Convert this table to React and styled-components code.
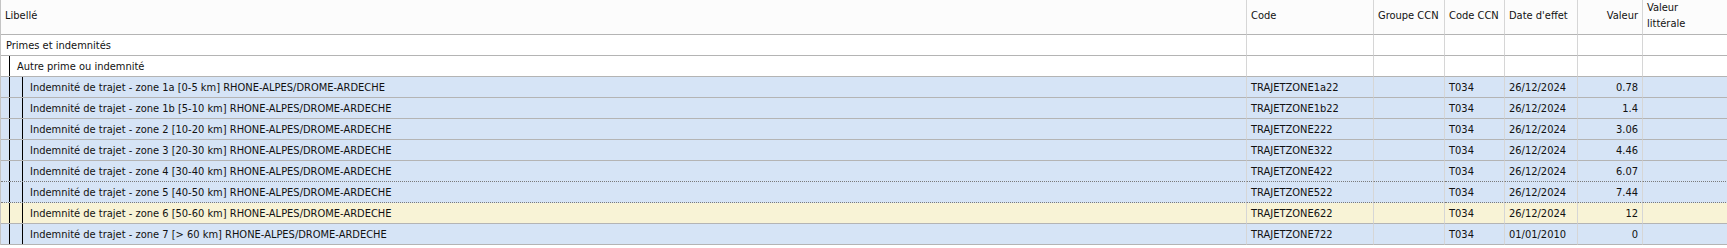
import React from "react";
import styled, { createGlobalStyle } from "styled-components";

const GlobalStyle = createGlobalStyle`
  html, body {
    margin: 0;
    padding: 0;
    background: #ffffff;
  }
  body {
    font-family: "DejaVu Sans Condensed", "DejaVu Sans", sans-serif;
    font-size: 11px;
    color: #111111;
  }
`;

const Grid = styled.table`
  width: 1727px;
  table-layout: fixed;
  border-collapse: separate;
  border-spacing: 0;
  border-left: 1px solid #c4c4c4;
  box-sizing: border-box;
`;

const HeadCell = styled.th`
  height: 35px;
  padding: ${(p) => (p.$wrap ? "0 4px" : "0 4px 4px")};
  background: #fcfcfc;
  font-weight: normal;
  text-align: ${(p) => (p.$align === "right" ? "right" : "left")};
  vertical-align: ${(p) => (p.$wrap ? "top" : "middle")};
  line-height: ${(p) => (p.$wrap ? "16px" : "17px")};
  border-bottom: 1px solid #b4b4b4;
  border-right: 1px solid #d6d6d6;
  white-space: ${(p) => (p.$wrap ? "pre-line" : "nowrap")};
  overflow: hidden;
  box-sizing: border-box;
  &:last-child {
    border-right: none;
  }
`;

const Row = styled.tr`
  background: ${(p) =>
    p.$tone === "selected" ? "#f8f3d6" : p.$tone === "item" ? "#d6e4f6" : "#ffffff"};
`;

const Cell = styled.td`
  height: 20px;
  padding: 0 4px;
  text-align: ${(p) => (p.$align === "right" ? "right" : "left")};
  vertical-align: middle;
  white-space: nowrap;
  overflow: hidden;
  border-bottom: 1px ${(p) => (p.$dotted ? "dotted #7a7a7a" : "solid #b4b4b4")};
  border-right: 1px solid #d6d6d6;
  &:last-child {
    border-right: none;
  }
`;

const TreeCell = styled(Cell)`
  padding: 0 4px 0 ${(p) => (p.$level === 0 ? "5px" : "8px")};
`;

const TreeBox = styled.div`
  display: flex;
  align-items: stretch;
  height: 20px;
`;

const Guide = styled.span`
  flex: none;
  width: 1px;
  background: #000000;
  margin-right: ${(p) => (p.$last ? "7px" : "12px")};
`;

const Label = styled.span`
  display: flex;
  align-items: center;
`;

const columns = [
  { key: "libelle", title: "Libellé", width: 1246 },
  { key: "code", title: "Code", width: 127 },
  { key: "groupe", title: "Groupe CCN", width: 71 },
  { key: "ccn", title: "Code CCN", width: 60 },
  { key: "date", title: "Date d'effet", width: 73 },
  { key: "valeur", title: "Valeur", width: 65, align: "right" },
  { key: "litt", title: "Valeur\nlittérale", width: 85, wrap: true },
];

const items = [
  ["zone 1a [0-5 km]", "TRAJETZONE1a22", "26/12/2024", "0.78"],
  ["zone 1b [5-10 km]", "TRAJETZONE1b22", "26/12/2024", "1.4"],
  ["zone 2 [10-20 km]", "TRAJETZONE222", "26/12/2024", "3.06"],
  ["zone 3 [20-30 km]", "TRAJETZONE322", "26/12/2024", "4.46"],
  ["zone 4 [30-40 km]", "TRAJETZONE422", "26/12/2024", "6.07"],
  ["zone 5 [40-50 km]", "TRAJETZONE522", "26/12/2024", "7.44"],
  ["zone 6 [50-60 km]", "TRAJETZONE622", "26/12/2024", "12"],
  ["zone 7 [> 60 km]", "TRAJETZONE722", "01/01/2010", "0"],
];

const rows = [
  { level: 0, libelle: "Primes et indemnités" },
  { level: 1, libelle: "Autre prime ou indemnité" },
  ...items.map(([zone, code, date, valeur], i) => ({
    level: 2,
    libelle: `Indemnité de trajet - ${zone} RHONE-ALPES/DROME-ARDECHE`,
    code,
    ccn: "T034",
    date,
    valeur,
    tone: i === 6 ? "selected" : "item",
  })),
];

// focused row (dotted frame) = zone 5
const focus = 7;

function TreeLabel({ level, text }) {
  const guides = [];
  for (let i = 0; i < level; i++) {
    guides.push(<Guide key={i} $last={i === level - 1} />);
  }
  return (
    <TreeBox>
      {guides}
      <Label>{text}</Label>
    </TreeBox>
  );
}

export default function App() {
  return (
    <>
      <GlobalStyle />
      <Grid>
        <colgroup>
          {columns.map((c) => (
            <col key={c.key} style={{ width: c.width }} />
          ))}
        </colgroup>
        <thead>
          <tr>
            {columns.map((c) => (
              <HeadCell key={c.key} $align={c.align} $wrap={c.wrap}>
                {c.title}
              </HeadCell>
            ))}
          </tr>
        </thead>
        <tbody>
          {rows.map((r, i) => {
            const dotted = i === focus || i === focus - 1;
            return (
              <Row key={i} $tone={r.tone}>
                <TreeCell $level={r.level} $dotted={dotted}>
                  <TreeLabel level={r.level} text={r.libelle} />
                </TreeCell>
                <Cell $dotted={dotted}>{r.code}</Cell>
                <Cell $dotted={dotted}>{r.groupe}</Cell>
                <Cell $dotted={dotted}>{r.ccn}</Cell>
                <Cell $dotted={dotted}>{r.date}</Cell>
                <Cell $dotted={dotted} $align="right">
                  {r.valeur}
                </Cell>
                <Cell $dotted={dotted}>{r.litt}</Cell>
              </Row>
            );
          })}
        </tbody>
      </Grid>
    </>
  );
}
